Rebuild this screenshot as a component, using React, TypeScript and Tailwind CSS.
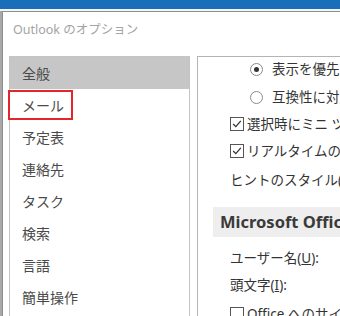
import React from "react";

const navItems = ["全般", "メール", "予定表", "連絡先", "タスク", "検索", "言語", "簡単操作"];

function Radio({ checked }: { checked?: boolean }) {
  return (
    <span className="flex h-[13px] w-[13px] shrink-0 items-center justify-center rounded-full border border-[#8a8a8a] bg-white">
      {checked && <span className="h-[5px] w-[5px] rounded-full bg-[#333]" />}
    </span>
  );
}

function Checkbox({ checked }: { checked?: boolean }) {
  return (
    <span className="flex h-[14px] w-[14px] shrink-0 items-center justify-center border border-[#555] bg-white">
      {checked && (
        <svg width="10" height="10" viewBox="0 0 10 10" fill="none">
          <path d="M1.2 5 L3.8 7.6 L8.8 1.8" stroke="#333" strokeWidth="1.3" />
        </svg>
      )}
    </span>
  );
}

export default function App() {
  return (
    <div
      className="relative flex h-[316px] w-[340px] flex-col overflow-hidden bg-white text-[#333]"
      style={{ fontFamily: '"Noto Sans", "Noto Sans CJK JP", sans-serif' }}
    >
      <div className="h-[9px] shrink-0 bg-[#1a6db8]" />
      <div className="h-[2px] shrink-0 bg-[#f4f4f4]" />
      <div className="flex flex-1">
        <div className="w-[2px] shrink-0 bg-[#a8a8a8]" />
        <div className="flex flex-1 flex-col border-l border-t border-[#8e8e8e] bg-white">
          {/* title */}
          <div className="h-[44px] pl-[10px] pt-[9px] text-[12.5px] leading-[18px] text-[#a4a4a4]">
            Outlook のオプション
          </div>

          <div className="flex flex-1">
            {/* left navigation */}
            <div className="ml-[6px] w-[181px] shrink-0 border border-b-0 border-[#c4c4c4]">
              {navItems.map((item, i) => (
                <div
                  key={item}
                  className={
                    "flex h-[32px] items-center whitespace-nowrap pl-[12px] text-[14px] text-[#4a4a4a] " +
                    (i === 0 ? "bg-[#c6c6c6]" : "")
                  }
                >
                  {item}
                </div>
              ))}
            </div>

            {/* right content */}
            <div className="ml-[7px] flex flex-1 flex-col border-l border-t border-[#b4b4b4] text-[13.5px] whitespace-nowrap">
              <div className="mt-[2px] flex h-[20px] items-center gap-[9px] pl-[52px]">
                <Radio checked />
                <span>表示を優先した最適化(A)</span>
              </div>
              <div className="mt-[8px] flex h-[20px] items-center gap-[9px] pl-[52px]">
                <Radio />
                <span>互換性に対応した最適化</span>
              </div>
              <div className="mt-[7px] flex h-[20px] items-center gap-[3px] pl-[32px]">
                <Checkbox checked />
                <span>選択時にミニ ツール バーを表示する(M)</span>
              </div>
              <div className="mt-[7px] flex h-[20px] items-center gap-[3px] pl-[32px]">
                <Checkbox checked />
                <span>リアルタイムのプレビュー表示機能を有効にする(L)</span>
              </div>
              <div className="mt-[9px] flex h-[20px] items-center pl-[32px]">
                <span>
                  ヒントのスタイル(<span className="underline">R</span>):
                </span>
              </div>

              <div className="ml-[15px] mt-[17px] flex h-[30px] items-center bg-[#eeeeee] pl-[7px] text-[16.5px] font-bold text-[#3a3a3a]">
                Microsoft Office のローカル コピーの個人設定
              </div>

              <div className="mt-[11px] flex h-[20px] items-center pl-[32px]">
                <span>
                  ユーザー名(<span className="underline">U</span>):
                </span>
              </div>
              <div className="mt-[7px] flex h-[20px] items-center pl-[32px]">
                <span>
                  頭文字(<span className="underline">I</span>):
                </span>
              </div>
              <div className="mt-[9px] flex h-[20px] items-center gap-[3px] pl-[32px]">
                <Checkbox />
                <span>Office へのサインイン状態にかかわらず、常にこれらの設定を使用する(A)</span>
              </div>
            </div>
          </div>
        </div>
      </div>

      {/* red highlight around "メール" */}
      <div className="absolute left-[8px] top-[90px] h-[30px] w-[65px] border-2 border-[#e4262c]" />
    </div>
  );
}
